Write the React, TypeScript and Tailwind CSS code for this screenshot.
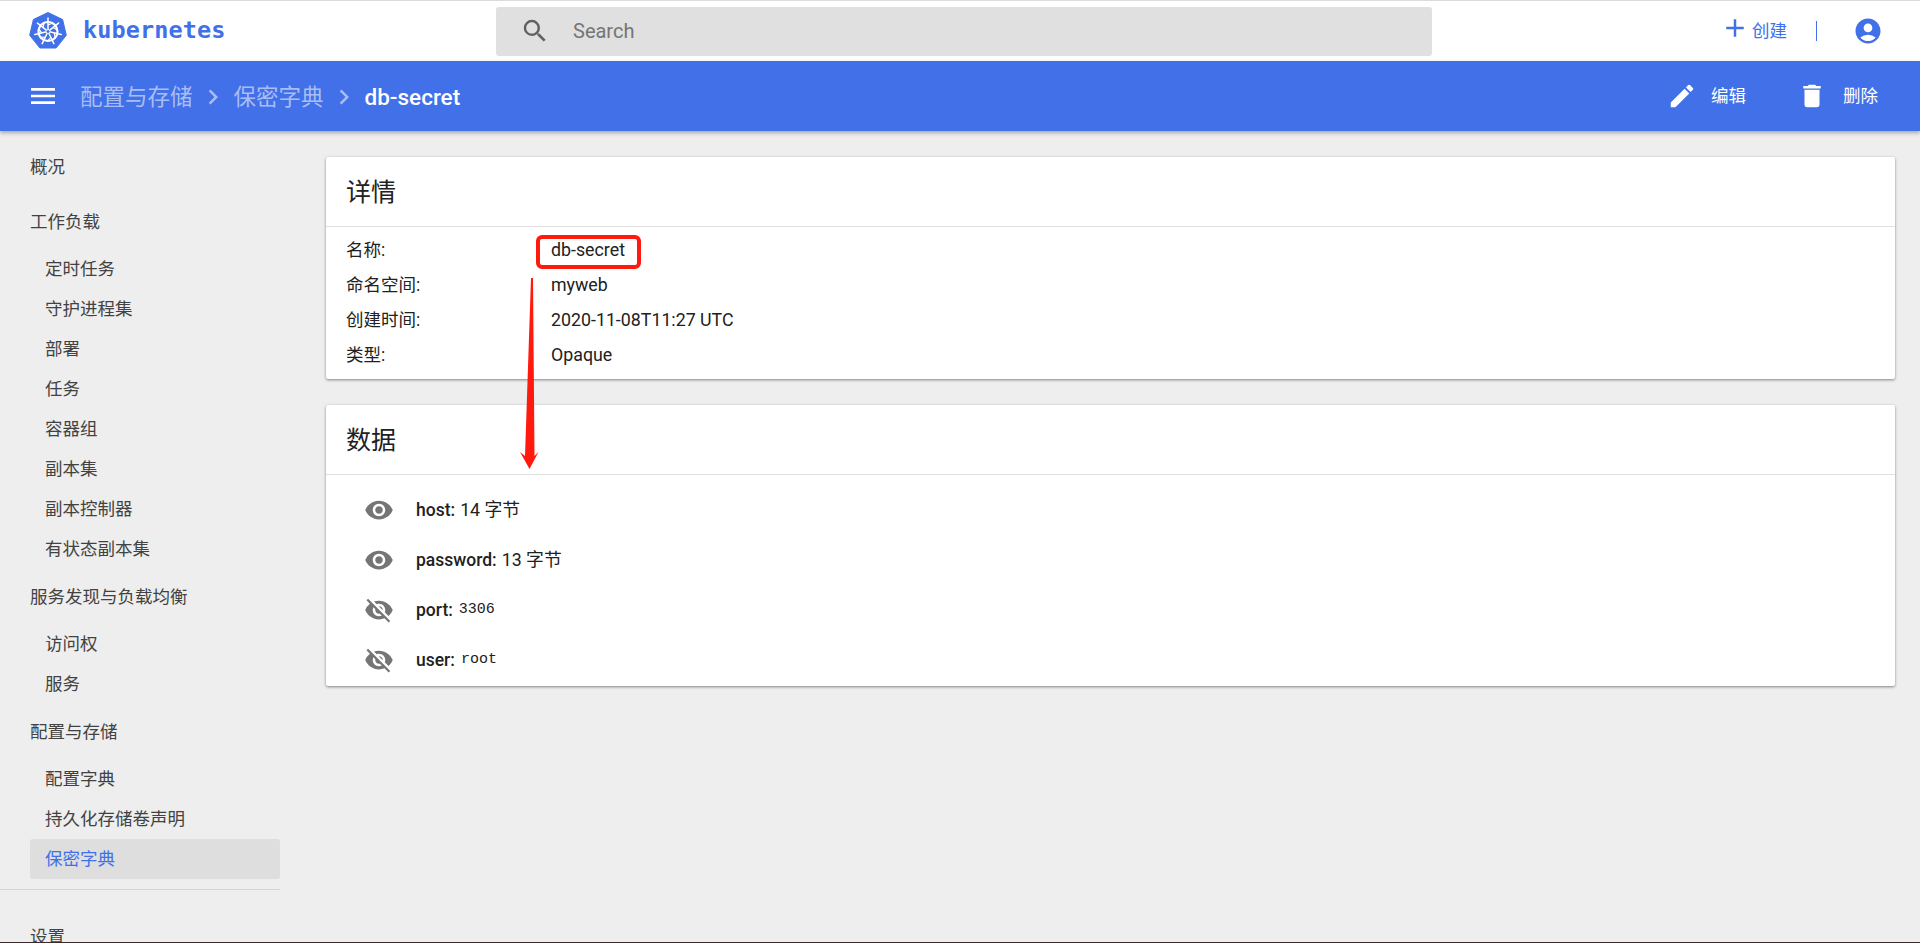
import { MdAccountCircle, MdAdd, MdChevronRight, MdDelete, MdEdit, MdMenu, MdSearch, MdVisibility, MdVisibilityOff } from 'react-icons/md'

const FONT = "font-['Roboto','Noto_Sans_CJK_SC',sans-serif]"

function KubeLogo() {
  const spokes = [0, 51.4, 102.8, 154.2, 205.7, 257.1, 308.5]
  return (
    <svg width="38" height="38" viewBox="0 0 38 38" className="shrink-0">
      <path d="M19 0.5 L33.6 7.5 L37.3 23.3 L27.1 36 L10.9 36 L0.7 23.3 L4.4 7.5 Z" fill="#4170e8" stroke="#4170e8" strokeLinejoin="round" />
      <circle cx="19" cy="19.5" r="9.5" fill="none" stroke="#fff" strokeWidth="2.2" />
      {spokes.map((a) => (
        <g key={a} transform={`rotate(${a} 19 19.5)`}>
          <line x1="19" y1="17" x2="19" y2="6" stroke="#fff" strokeWidth="1.5" strokeLinecap="round" />
          <line x1="19" y1="13" x2="24" y2="11" stroke="#fff" strokeWidth="1.2" />
        </g>
      ))}
      <circle cx="19" cy="19.5" r="2" fill="#4170e8" stroke="#fff" strokeWidth="1" />
    </svg>
  )
}

function Crumb({ label }: { label: string }) {
  return (
    <>
      <span className="text-[22.5px] text-[#a9bdf4] mt-[3px]">{label}</span>
      <MdChevronRight className="text-[30px] text-[#a9bdf4] mx-[5.5px] mt-[1px]" />
    </>
  )
}

function NavTitle({ label, className = '' }: { label: string; className?: string }) {
  return <div className={`h-[40px] flex items-center text-[17.5px] text-[#424242] ${className}`}>{label}</div>
}

function NavItem({ label, active }: { label: string; active?: boolean }) {
  return (
    <div
      className={`h-[40px] flex items-center pl-[15px] rounded-[3px] text-[17.5px] ${
        active ? 'bg-[#dedede] text-[#4170e8]' : 'text-[#424242]'
      }`}
    >
      {label}
    </div>
  )
}

function Sidebar() {
  return (
    <aside className="w-[280px] shrink-0 pl-[30px] pt-[16px] overflow-hidden">
      <NavTitle label="概况" />
      <NavTitle label="工作负载" className="mt-[15px]" />
      <div className="mt-[7px]">
        {['定时任务', '守护进程集', '部署', '任务', '容器组', '副本集', '副本控制器', '有状态副本集'].map((n) => (
          <NavItem key={n} label={n} />
        ))}
      </div>
      <NavTitle label="服务发现与负载均衡" className="mt-[8px]" />
      <div className="mt-[7px]">
        <NavItem label="访问权" />
        <NavItem label="服务" />
      </div>
      <NavTitle label="配置与存储" className="mt-[8px]" />
      <div className="mt-[7px]">
        <NavItem label="配置字典" />
        <NavItem label="持久化存储卷声明" />
        <NavItem label="保密字典" active />
      </div>
      <div className="h-px bg-[#d4d4d4] mt-[10px] -ml-[30px]" />
      <NavTitle label="设置" className="mt-[27px]" />
    </aside>
  )
}

function Card({ title, children }: { title: string; children: React.ReactNode }) {
  return (
    <section className="bg-white rounded-[2px] shadow-[0_1px_3px_rgba(0,0,0,0.45)]">
      <h2 className="h-[70px] flex items-center px-[20px] pt-[2px] text-[25px] font-normal text-[#212121] border-b border-[#e0e0e0]">{title}</h2>
      {children}
    </section>
  )
}

const details = [
  ['名称:', 'db-secret'],
  ['命名空间:', 'myweb'],
  ['创建时间:', '2020-11-08T11:27 UTC'],
  ['类型:', 'Opaque'],
]

const secrets = [
  { key: 'host', value: '14 字节', open: true },
  { key: 'password', value: '13 字节', open: true },
  { key: 'port', value: '3306', open: false },
  { key: 'user', value: 'root', open: false },
]

export default function App() {
  return (
    <div className={`${FONT} relative h-[943px] overflow-hidden bg-[#eeeeee] flex flex-col border-b border-[#3a2a2a]`}>
      <header className="h-[61px] shrink-0 bg-white border-t border-[#dcdcdc] flex items-center pl-[29px] pr-[37px]">
        <KubeLogo />
        <span className="ml-[16px] w-[161px] font-['DejaVu_Sans_Mono',monospace] font-bold text-[23.5px] text-[#4170e8] tracking-[0.1px]">kubernetes</span>
        <div className="ml-[252px] w-[936px] h-[49px] bg-[#e0e0e0] rounded-[3px] flex items-center pl-[24px]">
          <MdSearch className="text-[30px] text-[#616161]" />
          <span className="ml-[23px] text-[20px] text-[#757575]">Search</span>
        </div>
        <div className="ml-auto flex items-center">
          <MdAdd className="text-[30px] text-[#4170e8] -mt-[6px] -ml-[1px]" />
          <span className="ml-[2px] text-[17.5px] text-[#4170e8]">创建</span>
          <div className="w-px h-[20px] bg-[#4170e8] ml-[29px]" />
          <MdAccountCircle className="text-[30px] text-[#4170e8] ml-[36px]" />
        </div>
      </header>

      <div className="h-[70px] shrink-0 bg-[#4170e8] shadow-[0_2px_4px_rgba(0,0,0,0.3)] flex items-center pl-[27px] pr-[42px] text-white z-10">
        <MdMenu className="text-[32px]" />
        <div className="ml-[21px] flex items-center">
          <Crumb label="配置与存储" />
          <Crumb label="保密字典" />
          <span className="text-[22.5px] font-medium mt-[3px]">db-secret</span>
        </div>
        <div className="ml-auto flex items-center">
          <MdEdit className="text-[30px]" />
          <span className="ml-[14px] text-[17.5px]">编辑</span>
          <MdDelete className="text-[30px] ml-[51px]" />
          <span className="ml-[16px] text-[17.5px]">删除</span>
        </div>
      </div>

      <div className="flex flex-1 min-h-0">
        <Sidebar />
        <main className="flex-1 pl-[46px] pr-[25px] pt-[26px] flex flex-col gap-[26px]">
          <Card title="详情">
            <div className="px-[20px] pt-[6px] pb-[6px]">
              {details.map(([label, value]) => (
                <div key={label} className="h-[35px] flex items-center text-[17.5px] text-[#212121]">
                  <span className="w-[205px]">{label}</span>
                  <span className="text-[17.8px]">{value}</span>
                </div>
              ))}
            </div>
          </Card>
          <Card title="数据">
            <div className="pl-[38px] pt-[10px] pb-[1px]">
              {secrets.map((s) => (
                <div key={s.key} className="h-[50px] flex items-center text-[17.5px] text-[#212121]">
                  {s.open ? (
                    <MdVisibility className="text-[30px] text-[#757575]" />
                  ) : (
                    <MdVisibilityOff className="text-[30px] text-[#757575]" />
                  )}
                  <span className="ml-[22px] font-medium">{s.key}:</span>
                  {s.open ? (
                    <span className="ml-[5px] text-[17.8px]">{s.value}</span>
                  ) : (
                    <span className="ml-[6px] font-['Liberation_Mono',monospace] text-[15px]">{s.value}</span>
                  )}
                </div>
              ))}
            </div>
          </Card>
        </main>
      </div>

      {/* hand-drawn red marks on top of the screenshot */}
      <div className="absolute left-[536px] top-[235px] w-[105px] h-[34px] border-[4px] border-[#ff1a0d] rounded-[6px]" />
      <svg className="absolute left-[515px] top-[275px]" width="34" height="195" viewBox="0 0 34 195">
        <path d="M16 3 L18 3 L19.5 181 L23.5 177 L14.5 194 L5 177 L10 181 Z" fill="#ff1a0d" />
      </svg>
    </div>
  )
}
